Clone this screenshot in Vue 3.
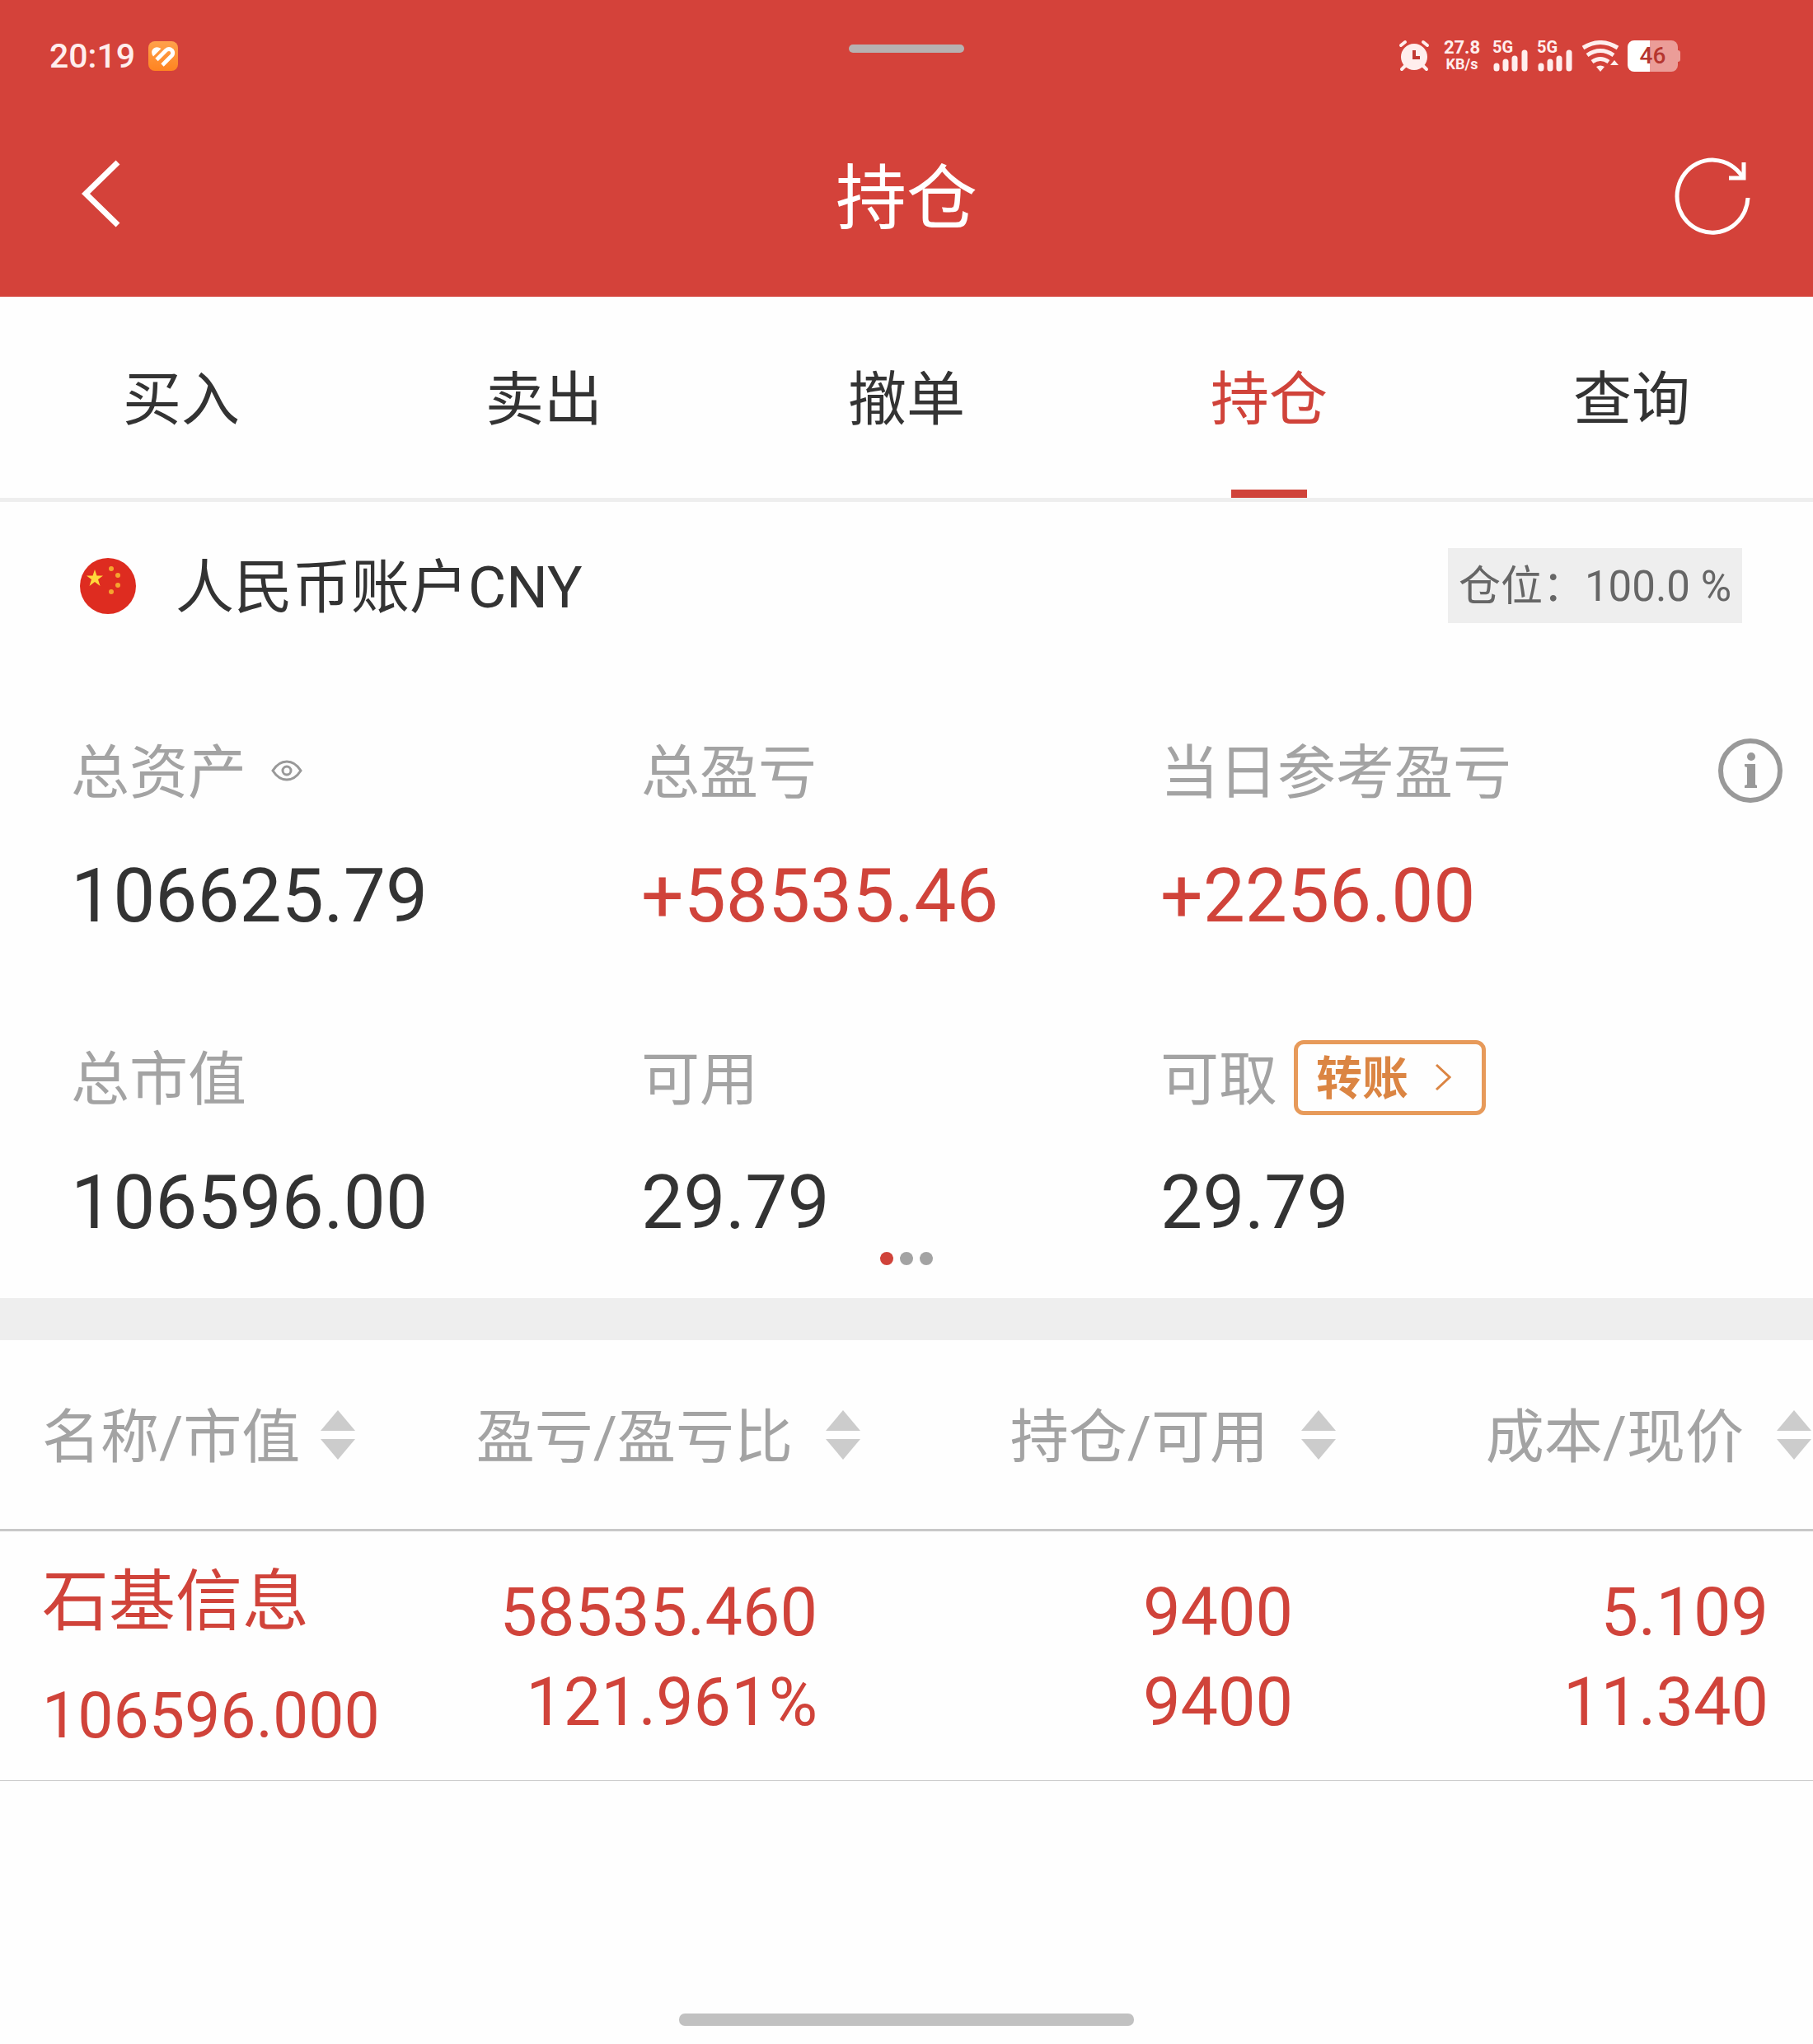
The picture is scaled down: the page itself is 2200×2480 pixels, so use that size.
<template>
  <div class="page">
    <header class="header">
      <div class="status-bar">
        <div class="status-left">
          <span class="clock">20:19</span>
          <svg class="app-icon" viewBox="0 0 36 36">
            <defs>
              <linearGradient id="appBg" x1="0" y1="0" x2="0" y2="1">
                <stop offset="0" stop-color="#ffa14c" />
                <stop offset="1" stop-color="#ff8420" />
              </linearGradient>
            </defs>
            <rect width="36" height="36" rx="8" fill="url(#appBg)" />
            <path d="M6 18.500 Q2 13 6 9 Q10 5.500 15.500 9 Z" fill="#fff" />
            <path d="M10 22.500 L21.500 11 Q25 8 28.500 11 Q31 14.500 28.500 17.500 L17 29" fill="none" stroke="#fff" stroke-width="4.800" />
          </svg>
        </div>
        <div class="grip"></div>
        <div class="status-right">
          <svg class="alarm" viewBox="0 0 38 40">
            <circle cx="19" cy="21" r="16" fill="#ffeeed" />
            <path d="M3 7 L8 3 M35 7 L30 3 M4 36 L9 31 M34 36 L29 31" stroke="#ffeeed" stroke-width="4" stroke-linecap="round" />
            <path d="M19 13 V22 H26" fill="none" stroke="#c23a33" stroke-width="4" />
          </svg>
          <div class="speed">
            <span class="speed-num">27.8</span>
            <span class="speed-unit">KB/s</span>
          </div>
          <div v-for="n in 2" :key="n" class="signal">
            <span class="signal-type">5G</span>
            <svg class="signal-bars" viewBox="0 0 44 38">
              <path d="M5 31 V34 M16 26 V34 M27 22 V34 M39 15 V34" stroke="#ffeeed" stroke-width="7" stroke-linecap="round" />
            </svg>
          </div>
          <svg class="wifi" viewBox="0 0 46 38">
            <g fill="none" stroke="#ffeeed" stroke-width="5">
              <path d="M2 9 Q23 -4 44 9" />
              <path d="M7 18 Q23 7 39 18" />
              <path d="M13 26 Q23 19 33 26" />
            </g>
            <path d="M18 32 Q23 29 28 32 L23 38 Z M35 30 L40 24 L45 30 Z" fill="#ffeeed" />
          </svg>
          <div class="battery">
            <span>46</span>
          </div>
        </div>
      </div>
      <div class="nav-bar">
        <button class="icon-btn" aria-label="返回">
          <svg class="back" viewBox="0 0 48 90">
            <path d="M45 4 L6 42 L45 80" fill="none" stroke="#fff" stroke-width="7" />
          </svg>
        </button>
        <h1 class="title">持仓</h1>
        <button class="icon-btn refresh-btn" aria-label="刷新">
          <svg class="refresh" viewBox="0 0 92 94">
            <path d="M89 49 A43 44 0 1 1 82 23" fill="none" stroke="#fff" stroke-width="5" />
            <path d="M84 6 V25 H66" fill="none" stroke="#fff" stroke-width="5" />
          </svg>
        </button>
      </div>
    </header>

    <nav class="tabs">
      <button
        v-for="tab in tabs"
        :key="tab"
        class="tab"
        :class="{ active: tab === current }"
        @click="current = tab"
      >{{ tab }}</button>
    </nav>

    <section class="account">
      <svg class="flag" viewBox="0 0 68 68">
        <circle cx="34" cy="34" r="34" fill="#de2c20" />
        <path d="M18 14 L20.500 21.500 H28 L22 26 L24.500 34 L18 29 L11.500 34 L14 26 L8 21.500 H15.500 Z" fill="#ffd93b" />
        <g fill="#f5a52f">
          <circle cx="38" cy="13" r="3" />
          <circle cx="46" cy="21" r="3" />
          <circle cx="46" cy="33" r="3" />
          <circle cx="38" cy="41" r="3" />
        </g>
      </svg>
      <span class="account-name">人民币账户CNY</span>
      <span class="position">仓位：100.0 %</span>
    </section>

    <section class="summary">
      <div v-for="item in summary" :key="item.label" class="cell">
        <div class="cell-label">
          <span class="label-text">{{ item.label }}</span>
          <button v-if="item.eye" class="icon-btn eye-btn" aria-label="隐藏金额">
            <svg class="eye" viewBox="0 0 38 26">
              <path d="M2 13 Q9 2 19 2 Q29 2 36 13 Q29 24 19 24 Q9 24 2 13 Z" fill="none" stroke="#999" stroke-width="3" />
              <circle cx="19" cy="13" r="5" fill="none" stroke="#999" stroke-width="3" />
            </svg>
          </button>
          <button v-if="item.transfer" class="transfer">
            <span>转账</span>
            <svg class="transfer-arrow" viewBox="0 0 20 34">
              <path d="M2 2 L18 17 L2 32" fill="none" stroke="#db8543" stroke-width="3" />
            </svg>
          </button>
          <button v-if="item.info" class="icon-btn info-btn" aria-label="说明">
            <svg class="info" viewBox="0 0 78 78">
              <circle cx="39" cy="39" r="36" fill="none" stroke="#999" stroke-width="6" />
              <circle cx="40" cy="22" r="5" fill="#999" />
              <path d="M32 31 H45 V56 L47 57 V60 H32 V57 L35 56 V35 L32 34 Z" fill="#999" />
            </svg>
          </button>
        </div>
        <div class="cell-value" :class="{ up: item.up }">{{ item.value }}</div>
      </div>
    </section>
    <div class="dots">
      <i v-for="n in 3" :key="n" :class="{ on: n === 1 }"></i>
    </div>

    <table class="holdings">
      <colgroup>
        <col class="col-name" />
        <col span="3" />
      </colgroup>
      <thead>
        <tr>
          <th v-for="col in columns" :key="col">
            <button class="sort">
              <span class="label-text">{{ col }}</span>
              <svg class="sort-icon" viewBox="0 0 42 60">
                <path d="M21 0 L42 25 H0 Z M21 60 L42 35 H0 Z" fill="#ccc" />
              </svg>
            </button>
          </th>
        </tr>
      </thead>
      <tbody>
        <tr v-for="row in holdings" :key="row.name">
          <td>
            <div class="stock-name">{{ row.name }}</div>
            <div class="stock-value">{{ row.marketValue }}</div>
          </td>
          <td>
            <div>{{ row.profit }}</div>
            <div>{{ row.profitRate }}</div>
          </td>
          <td>
            <div>{{ row.amount }}</div>
            <div>{{ row.available }}</div>
          </td>
          <td>
            <div>{{ row.cost }}</div>
            <div>{{ row.price }}</div>
          </td>
        </tr>
      </tbody>
    </table>

    <div class="home-bar"></div>
  </div>
</template>

<script setup>
import { ref } from 'vue'

const tabs = ['买入', '卖出', '撤单', '持仓', '查询']
const current = ref('持仓')

const summary = [
  { label: '总资产', value: '106625.79', eye: true },
  { label: '总盈亏', value: '+58535.46', up: true },
  { label: '当日参考盈亏', value: '+2256.00', up: true, info: true },
  { label: '总市值', value: '106596.00' },
  { label: '可用', value: '29.79' },
  { label: '可取', value: '29.79', transfer: true }
]

const columns = ['名称/市值', '盈亏/盈亏比', '持仓/可用', '成本/现价']

const holdings = [
  {
    name: '石基信息',
    marketValue: '106596.000',
    profit: '58535.460',
    profitRate: '121.961%',
    amount: '9400',
    available: '9400',
    cost: '5.109',
    price: '11.340'
  }
]
</script>

<style>
body { margin: 0; background: #fefefe; }
</style>

<style scoped>
.page {
  min-height: 100vh;
  display: flex; flex-direction: column;
  background: #fefefe;
  color: #333;
  font-family: Roboto, "Noto Sans CJK SC", sans-serif;
}
button {
  font: inherit; color: inherit;
  background: none; border: 0; padding: 0; margin: 0;
  cursor: pointer;
}
svg { display: block; flex: none; }

.header { background: #d4423a; }

/* 状态栏 */
.status-bar {
  display: grid; grid-template-columns: 1fr 140px 1fr;
  height: 136px;
  align-items: center;
  color: #ffeeed;
}
.status-left { display: flex; align-items: center; gap: 16px; padding-left: 60px; }
.clock { font-size: 41px; line-height: 48px; font-weight: 500; }
.app-icon { width: 36px; height: 36px; }
.grip { height: 10px; border-radius: 5px; background: #b7b1b1; margin-bottom: 18px; }
.status-right {
  display: flex; align-items: center; justify-content: flex-end;
  padding-right: 164px;
}
.alarm { width: 38px; height: 40px; margin-right: 16px; }
.speed {
  display: flex; flex-direction: column; align-items: center;
  width: 46px; margin-right: 14px;
  font-weight: 700;
}
.speed-num { font-size: 22px; line-height: 20px; }
.speed-unit { font-size: 18px; line-height: 20px; }
.signal { position: relative; width: 44px; height: 38px; margin-right: 10px; }
.signal-type {
  position: absolute; left: 0; top: 0;
  font-size: 20px; line-height: 16px; font-weight: 700;
}
.signal-bars { width: 44px; height: 38px; }
.wifi { width: 46px; height: 38px; margin-right: 10px; }
.battery {
  position: relative;
  width: 61px; height: 38px;
  border-radius: 8px;
  background: linear-gradient(90deg, #fff 27px, #eb9d98 27px);
  color: #b6362f;
  font-size: 28px; line-height: 38px; font-weight: 500;
  text-align: center;
}
.battery::after {
  content: ''; position: absolute; right: -3px; top: 12px;
  width: 3px; height: 14px; border-radius: 0 3px 3px 0;
  background: #eb9d98;
}

.nav-bar {
  display: grid; grid-template-columns: 1fr auto 1fr;
  align-items: center;
  height: 224px;
  box-sizing: border-box;
  padding: 0 76px 20px 98px;
}
.icon-btn { display: flex; }
.nav-bar .icon-btn { justify-self: start; }
.nav-bar .refresh-btn { justify-self: end; }
.back { width: 48px; height: 90px; }
.refresh { width: 92px; height: 94px; }
/* 左右内边距不等，标题左移补齐居中 */
.title {
  margin: 0 22px 0 0; padding-top: 8px;
  font-size: 86px; line-height: 100px; font-weight: 400; color: #fff;
}

.tabs { display: flex; border-bottom: 5px solid #eee; }
.tab {
  flex: 1;
  position: relative;
  height: 244px; padding-top: 6px;
  font-size: 71px; line-height: 84px;
}
.tab.active { color: #d0433a; }
.tab.active::after {
  content: ''; position: absolute; left: 50%; bottom: 0;
  width: 92px; height: 10px; margin-left: -46px;
  background: #d0433a;
}

.account {
  display: flex; align-items: center;
  padding: 53px 86px 0 97px;
  font-size: 71px;
}
.flag { width: 68px; height: 68px; margin-right: 48px; }
.account-name { padding-top: 5px; line-height: 92px; }
.position {
  margin-left: auto;
  padding: 3px 13px 0;
  background: #eee; color: #666;
  font-size: 51px; line-height: 88px;
}

.summary {
  display: grid; grid-template-columns: 692fr 630fr 755fr;
  padding: 130px 37px 0 86px;
  row-gap: 120px;
}
.label-text { padding-top: 6px; }
.cell-label {
  display: flex; align-items: center;
  height: 92px;
  font-size: 71px; line-height: 92px; color: #a3a3a3;
}
.eye-btn { margin-left: 30px; }
.eye { width: 38px; height: 26px; }
.info-btn { margin-left: auto; }
.info { width: 78px; height: 78px; }
.transfer {
  display: flex; align-items: center; justify-content: space-between;
  box-sizing: border-box;
  width: 233px; height: 91px;
  margin-left: 20px;
  padding: 0 37px 0 22px;
  border: 5px solid #e79a5a; border-radius: 12px;
  color: #db8543;
  font-size: 56px; line-height: 76px; font-weight: 700;
}
.transfer span { padding-top: 4px; }
.transfer-arrow { width: 20px; height: 34px; }
.cell-value { margin-top: 52px; font-size: 91px; line-height: 108px; }
.cell-value.up { color: #d0433a; }

.dots {
  display: flex; justify-content: center; gap: 8px;
  padding: 6px 0 40px;
}
.dots i { width: 16px; height: 16px; border-radius: 50%; background: #a3a3a3; }
.dots i.on { background: #d0433a; }

.holdings {
  width: 100%;
  table-layout: fixed; border-collapse: collapse;
  border-top: 51px solid #eee;
}
.col-name { width: 469px; }
.holdings th {
  height: 229px; padding: 0 2px 0 0;
  border-bottom: 3px solid #c8c8c8;
  font-weight: 400; color: #a3a3a3;
}
.sort {
  display: flex; align-items: center; gap: 40px;
  margin-left: auto;
  font-size: 71px; line-height: 92px; white-space: nowrap;
}
th:first-child .sort { margin: 0 0 0 51px; gap: 25px; }
.sort-icon { width: 42px; height: 60px; }
.holdings td {
  padding: 44px 54px 40px 0;
  border-bottom: 1px solid #c8c8c8;
  text-align: right; white-space: nowrap;
  font-size: 81px; line-height: 109px;
  color: #d0433a;
}
.holdings td:first-child {
  padding: 26px 0 18px 51px;
  text-align: left; line-height: 120px;
}
.stock-value { margin-top: 18px; font-size: 77px; }

.home-bar {
  width: 552px; height: 15px;
  margin: auto auto 22px;
  border-radius: 7px;
  background: #c1c1c1;
}
</style>
